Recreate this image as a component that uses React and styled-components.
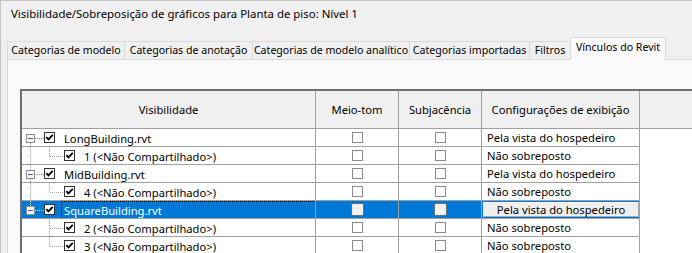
import styled, { createGlobalStyle } from "styled-components";

const GlobalStyle = createGlobalStyle`
  html, body {
    margin: 0;
    padding: 0;
    background: #ffffff;
  }
  body {
    font-family: "Noto Sans", "Open Sans", sans-serif;
    font-size: 11.2px;
    color: #000;
  }
`;

const tabs = [
  { label: "Categorias de modelo", width: 117 },
  { label: "Categorias de anotação", width: 128 },
  { label: "Categorias de modelo analítico", width: 157 },
  { label: "Categorias importadas", width: 120 },
  { label: "Filtros", width: 41 },
  { label: "Vínculos do Revit", width: 96, active: true },
];

const rows = [
  { kind: "parent", name: "LongBuilding.rvt", display: "Pela vista do hospedeiro", first: true },
  { kind: "child", name: "1 (<Não Compartilhado>)", display: "Não sobreposto", lastChild: true },
  { kind: "parent", name: "MidBuilding.rvt", display: "Pela vista do hospedeiro" },
  { kind: "child", name: "4 (<Não Compartilhado>)", display: "Não sobreposto", lastChild: true },
  { kind: "parent", name: "SquareBuilding.rvt", display: "Pela vista do hospedeiro", last: true, selected: true },
  { kind: "child", name: "2 (<Não Compartilhado>)", display: "Não sobreposto", parentLast: true },
  { kind: "child", name: "3 (<Não Compartilhado>)", display: "Não sobreposto", parentLast: true, lastChild: true },
];

const Window = styled.div`
  width: 692px;
  height: 253px;
  overflow: hidden;
  box-sizing: border-box;
  background: #f0f0f0;
  border-top: 1px solid #c4c4c4;
  border-left: 1px solid #c4c4c4;
  display: flex;
  flex-direction: column;
`;

const TitleBar = styled.div`
  height: 25px;
  padding-left: 10px;
  display: flex;
  align-items: center;
  flex-shrink: 0;
  white-space: nowrap;
  font-size: 11.4px;
`;

const TabStrip = styled.div`
  height: 33px;
  padding-left: 6px;
  display: flex;
  align-items: flex-end;
  flex-shrink: 0;
`;

const Tab = styled.div`
  box-sizing: border-box;
  width: ${(p) => p.$width}px;
  height: ${(p) => (p.$active ? 23 : 18)}px;
  margin-bottom: ${(p) => (p.$active ? -1 : 0)}px;
  padding-bottom: ${(p) => (p.$active ? 4 : 1)}px;
  border: 1px solid #d9d9d9;
  border-bottom: none;
  border-right: ${(p) => (p.$active ? "1px solid #d9d9d9" : "none")};
  background: ${(p) => (p.$active ? "#f9f9f9" : "#f0f0f0")};
  position: relative;
  z-index: ${(p) => (p.$active ? 1 : 0)};
  display: flex;
  align-items: center;
  justify-content: center;
  white-space: nowrap;
  overflow: hidden;
  font-size: 10.6px;
`;

const Panel = styled.div`
  flex: 1;
  margin-left: 6px;
  border-top: 1px solid #d9d9d9;
  border-left: 1px solid #d9d9d9;
  background: #f9f9f9;
  padding: 29px 0 0 12px;
`;

const Grid = styled.div`
  background: #ffffff;
  border-top: 2px solid #6e6e6e;
  border-left: 2px solid #6e6e6e;
  height: 100%;
`;

const columns = "294px 83px 83px 158px 1fr";

const HeaderRow = styled.div`
  display: grid;
  grid-template-columns: ${columns};
  height: 38px;
`;

const HeaderCell = styled.div`
  background: #f0f0f0;
  border-bottom: 1px solid #a0a0a0;
  border-right: ${(p) => (p.$blank ? "none" : "1px solid #a0a0a0")};
  display: flex;
  align-items: center;
  justify-content: center;
  white-space: nowrap;
`;

const Row = styled.div`
  display: grid;
  grid-template-columns: ${columns};
  height: 18px;
`;

const Cell = styled.div`
  box-sizing: border-box;
  height: 18px;
  border-bottom: 1px solid #a0a0a0;
  border-right: 1px solid #a0a0a0;
  background: ${(p) => (p.$selected ? "#0078d7" : "#ffffff")};
  color: ${(p) => (p.$selected ? "#ffffff" : "#000000")};
  display: flex;
  align-items: center;
  justify-content: ${(p) => (p.$center ? "center" : "flex-start")};
  white-space: nowrap;
  overflow: hidden;
`;

const BlankCell = styled.div`
  background: #ffffff;
`;

const TreeCell = styled(Cell)`
  padding-left: 4px;
  align-items: stretch;
`;

const Guides = styled.svg`
  flex-shrink: 0;
  display: block;
`;

const BoxSlot = styled.div`
  display: flex;
  align-items: center;
  flex-shrink: 0;
`;

const Label = styled.div`
  flex: 1;
  margin-left: ${(p) => p.$gap}px;
  padding-left: 2px;
  border: 1px dotted ${(p) => (p.$focused ? "#000000" : "transparent")};
  border-right: none;
  border-bottom: none;
  display: flex;
  align-items: center;
`;

const DisplayText = styled.span`
  padding-left: 5px;
`;

const DisplayButton = styled.div`
  box-sizing: border-box;
  margin: 1px 0 1px 1px;
  flex: 1;
  height: 15px;
  background: #efefef;
  border: 1px solid #a7a7a7;
  border-top-color: #f6f6f6;
  border-left-color: #f6f6f6;
  color: #000;
  display: flex;
  align-items: center;
  justify-content: center;
`;

const Box = styled.span`
  box-sizing: border-box;
  width: ${(p) => (p.$raised ? 13 : 11)}px;
  height: ${(p) => (p.$raised ? 13 : 11)}px;
  border: 1px solid ${(p) => (p.$checked ? "#333333" : p.$raised ? "#6e6e6e" : "#8a8a8a")};
  border-radius: ${(p) => (p.$raised ? 2 : 0)}px;
  background: ${(p) => (p.$raised ? "#f1f1f1" : "#ffffff")};
  display: flex;
  align-items: center;
  justify-content: center;
  flex-shrink: 0;
`;

function CheckBox({ checked, raised }) {
  return (
    <Box $checked={checked} $raised={raised}>
      {checked && (
        <svg width="9" height="9" viewBox="0 0 9 9">
          <path d="M1.3 4.2 L3.4 6.4 L7.8 1.8" fill="none" stroke="#000" strokeWidth="1.8" />
        </svg>
      )}
    </Box>
  );
}

const dot = { strokeDasharray: "1 1", shapeRendering: "crispEdges" };

function ParentGuides({ first, last, selected }) {
  const c = selected ? "#ffffff" : "#a0a0a0";
  return (
    <Guides width="18" height="17" viewBox="0 0 18 17">
      {!first && <line x1="4.5" y1="0" x2="4.5" y2="5" stroke={c} style={dot} />}
      {!last && <line x1="4.5" y1="14" x2="4.5" y2="17" stroke={c} style={dot} />}
      <line x1="9" y1="9.5" x2="18" y2="9.5" stroke={c} style={dot} />
      <rect x="0.5" y="5.5" width="8" height="8" fill="#f7f7f7" stroke="#8f8f8f" shapeRendering="crispEdges" />
      <line x1="2" y1="9.5" x2="7" y2="9.5" stroke="#3e62ad" shapeRendering="crispEdges" />
    </Guides>
  );
}

function ChildGuides({ parentLast, lastChild }) {
  const c = "#a0a0a0";
  return (
    <Guides width="38" height="17" viewBox="0 0 38 17">
      {!parentLast && <line x1="4.5" y1="0" x2="4.5" y2="17" stroke={c} style={dot} />}
      <line x1="23.5" y1="0" x2="23.5" y2={lastChild ? 9 : 17} stroke={c} style={dot} />
      <line x1="24" y1="9.5" x2="37" y2="9.5" stroke={c} style={dot} />
    </Guides>
  );
}

function TreeRow({ row }) {
  const sel = row.selected;
  return (
    <Row>
      <TreeCell $selected={sel}>
        {row.kind === "parent" ? (
          <ParentGuides first={row.first} last={row.last} selected={sel} />
        ) : (
          <ChildGuides parentLast={row.parentLast} lastChild={row.lastChild} />
        )}
        <BoxSlot>
          <CheckBox checked />
        </BoxSlot>
        <Label $gap={6} $focused={sel}>
          {row.name}
        </Label>
      </TreeCell>
      <Cell $center $selected={sel}>
        <CheckBox raised={sel} />
      </Cell>
      <Cell $center $selected={sel}>
        <CheckBox raised={sel} />
      </Cell>
      <Cell $selected={sel}>
        {sel ? <DisplayButton>{row.display}</DisplayButton> : <DisplayText>{row.display}</DisplayText>}
      </Cell>
      <BlankCell />
    </Row>
  );
}

export default function App() {
  return (
    <>
      <GlobalStyle />
      <Window>
        <TitleBar>Visibilidade/Sobreposição de gráficos para Planta de piso: Nível 1</TitleBar>
        <TabStrip>
          {tabs.map((t) => (
            <Tab key={t.label} $width={t.width} $active={t.active}>
              {t.label}
            </Tab>
          ))}
        </TabStrip>
        <Panel>
          <Grid>
            <HeaderRow>
              <HeaderCell>Visibilidade</HeaderCell>
              <HeaderCell>Meio-tom</HeaderCell>
              <HeaderCell>Subjacência</HeaderCell>
              <HeaderCell>Configurações de exibição</HeaderCell>
              <HeaderCell $blank />
            </HeaderRow>
            {rows.map((r) => (
              <TreeRow key={r.name} row={r} />
            ))}
          </Grid>
        </Panel>
      </Window>
    </>
  );
}
